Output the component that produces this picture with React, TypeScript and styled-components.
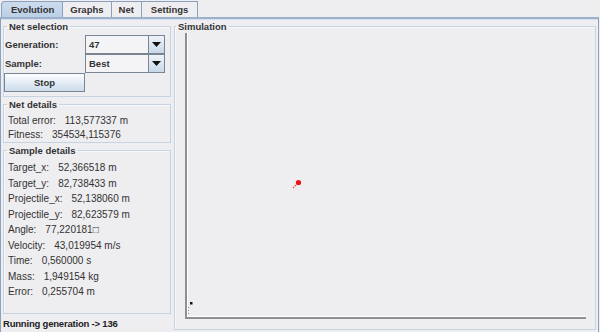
import React from 'react';
import styled, { createGlobalStyle } from 'styled-components';

const GlobalStyle = createGlobalStyle`
  html, body {
    margin: 0;
    padding: 0;
    background: #eeedf0;
  }
  * {
    box-sizing: border-box;
  }
`;

const tabs = ['Evolution', 'Graphs', 'Net', 'Settings'];

const sampleRows: [string, string][] = [
  ['Target_x:', '52,366518 m'],
  ['Target_y:', '82,738433 m'],
  ['Projectile_x:', '52,138060 m'],
  ['Projectile_y:', '82,623579 m'],
  ['Angle:', '77,220181\u25A1'],
  ['Velocity:', '43,019954 m/s'],
  ['Time:', '0,560000 s'],
  ['Mass:', '1,949154 kg'],
  ['Error:', '0,255704 m'],
];

const ArrowIcon = () => (
  <svg width="9" height="5" viewBox="0 0 9 5">
    <path d="M0 0 H9 L4.5 5 Z" fill="#111" />
  </svg>
);

const Combo = ({ value }: { value: string }) => (
  <StyledCombo>
    <ComboValue>{value}</ComboValue>
    <ComboArrow>
      <ArrowIcon />
    </ComboArrow>
  </StyledCombo>
);

const SimulationPlot = () => (
  <PlotSvg width="420" height="296" viewBox="0 0 420 296">
    <line x1="10" y1="1" x2="10" y2="286" stroke="#8f8f92" strokeWidth="2" />
    <line x1="11.5" y1="1" x2="11.5" y2="284" stroke="#ffffff" strokeWidth="1" />
    <line x1="9" y1="286" x2="410" y2="286" stroke="#8f8f92" strokeWidth="2" />
    <line x1="11" y1="284.5" x2="410" y2="284.5" stroke="#ffffff" strokeWidth="1" />
    <line x1="117" y1="156" x2="121" y2="152" stroke="#ff4040" strokeWidth="1.2" strokeDasharray="1.5 1" />
    <circle cx="122.5" cy="150.5" r="2.6" fill="#ee1111" />
    <rect x="14" y="270" width="2.5" height="2.5" fill="#111" />
    <line x1="12.5" y1="275" x2="12.5" y2="284" stroke="#888" strokeWidth="1" strokeDasharray="1 2" />
  </PlotSvg>
);

const App = () => {
  return (
    <>
      <GlobalStyle />
      <Window>
        <TabStrip>
          {tabs.map((t, i) => (
            <Tab key={t} $selected={i === 0}>{t}</Tab>
          ))}
        </TabStrip>
        <TabBody>
          <LeftColumn>
            <Group $height={76}>
              <Legend>Net selection</Legend>
              <SelectionGrid>
                <FieldLabel>Generation:</FieldLabel>
                <Combo value="47" />
                <FieldLabel>Sample:</FieldLabel>
                <Combo value="Best" />
                <StopButton>Stop</StopButton>
              </SelectionGrid>
            </Group>
            <Group $height={44}>
              <Legend>Net details</Legend>
              <InfoList $gap={14} $top={3}>
                <InfoRow>
                  <span>Total error:</span>
                  <span>113,577337 m</span>
                </InfoRow>
                <InfoRow>
                  <span>Fitness:</span>
                  <span>354534,115376</span>
                </InfoRow>
              </InfoList>
            </Group>
            <Group $height={169}>
              <Legend>Sample details</Legend>
              <InfoList $gap={15.5} $top={4}>
                {sampleRows.map(([k, v]) => (
                  <InfoRow key={k}>
                    <span>{k}</span>
                    <span>{v}</span>
                  </InfoRow>
                ))}
              </InfoList>
            </Group>
            <StatusText>Running generation -&gt; 136</StatusText>
          </LeftColumn>
          <SimGroup>
            <Legend>Simulation</Legend>
            <SimulationPlot />
          </SimGroup>
        </TabBody>
      </Window>
    </>
  );
};

export default App;

const Window = styled.div`
  width: 600px;
  height: 332px;
  display: flex;
  flex-direction: column;
  background: #eeedf0;
  font-family: 'Liberation Sans', Arial, sans-serif;
  font-size: 9.5px;
  color: #222;
  overflow: hidden;
`;

const TabStrip = styled.div`
  display: flex;
  height: 17px;
  padding: 1px 0 0 1px;
  align-items: flex-end;
`;

const Tab = styled.div<{ $selected?: boolean }>`
  height: 16px;
  padding: 0 7px;
  display: flex;
  align-items: center;
  font-weight: bold;
  font-size: 9.5px;
  color: #333;
  border: 1px solid #8aa0bd;
  border-bottom: none;
  border-left: ${({ $selected }) => ($selected ? '1px solid #8aa0bd' : 'none')};
  border-radius: ${({ $selected }) => ($selected ? '4px 0 0 0' : '0')};
  background: ${({ $selected }) => ($selected ? 'linear-gradient(#cddced, #bbd0e6)' : '#eeedf0')};
  &:first-child {
    padding: 0 8px 0 9px;
  }
  &:last-child {
    padding: 0 9px;
  }
`;

const TabBody = styled.div`
  flex: 1;
  display: flex;
  gap: 3px;
  padding: 2px;
  border: 1px solid #8aa0bd;
  border-top: 2px solid #9cb1cc;
  box-shadow: inset 0 1px 0 #d7e1ee;
  margin-right: 1px;
  margin-bottom: 1px;
`;

const LeftColumn = styled.div`
  width: 168px;
  display: flex;
  flex-direction: column;
  gap: 2px;
`;

const Group = styled.fieldset<{ $height?: number }>`
  margin: 0;
  padding: 0 3px;
  min-width: 0;
  height: ${({ $height }) => ($height ? `${$height}px` : 'auto')};
  border: 1px solid #c6d3e3;
  box-shadow: inset 1px 1px 0 #f6f7fa;
`;

const SimGroup = styled(Group)`
  flex: 1;
  height: 309px;
  padding: 0 0 0 1px;
`;

const Legend = styled.legend`
  padding: 0 2px;
  margin-left: 0;
  font-weight: bold;
  font-size: 9.5px;
  color: #333;
  line-height: 11px;
`;

const SelectionGrid = styled.div`
  display: grid;
  grid-template-columns: 81px 80px;
  grid-auto-rows: 19px;
  margin-top: 3px;
  margin-left: -3px;
`;

const FieldLabel = styled.div`
  display: flex;
  align-items: center;
  padding-left: 1px;
  font-weight: bold;
  color: #333;
`;

const StyledCombo = styled.div`
  display: flex;
  height: 19px;
  border: 1px solid #7a8594;
  background: #f4f4f6;
  & + & {
    border-top: none;
  }
`;

const ComboValue = styled.div`
  flex: 1;
  display: flex;
  align-items: center;
  padding-left: 3px;
  font-weight: bold;
  color: #333;
`;

const ComboArrow = styled.div`
  width: 16px;
  display: flex;
  align-items: center;
  justify-content: center;
  border-left: 1px solid #7a8594;
  background: linear-gradient(#eef3f9, #c8d8ea);
`;

const StopButton = styled.button`
  height: 19px;
  margin: 0;
  padding: 0;
  border: 1px solid #7a8594;
  background: linear-gradient(#fdfeff, #ccdbec);
  font-family: 'Liberation Sans', Arial, sans-serif;
  font-weight: bold;
  font-size: 9.5px;
  color: #333;
`;

const InfoList = styled.div<{ $gap: number; $top: number }>`
  display: grid;
  grid-auto-rows: ${({ $gap }) => `${$gap}px`};
  margin-top: ${({ $top }) => `${$top}px`};
  padding-left: 1px;
  font-size: 10px;
  color: #333;
`;

const InfoRow = styled.div`
  display: flex;
  align-items: center;
  gap: 9px;
  white-space: nowrap;
`;

const StatusText = styled.div`
  flex: 1;
  display: flex;
  align-items: center;
  font-weight: bold;
  font-size: 9.5px;
  color: #222;
  letter-spacing: -0.2px;
`;

const PlotSvg = styled.svg`
  display: block;
`;
